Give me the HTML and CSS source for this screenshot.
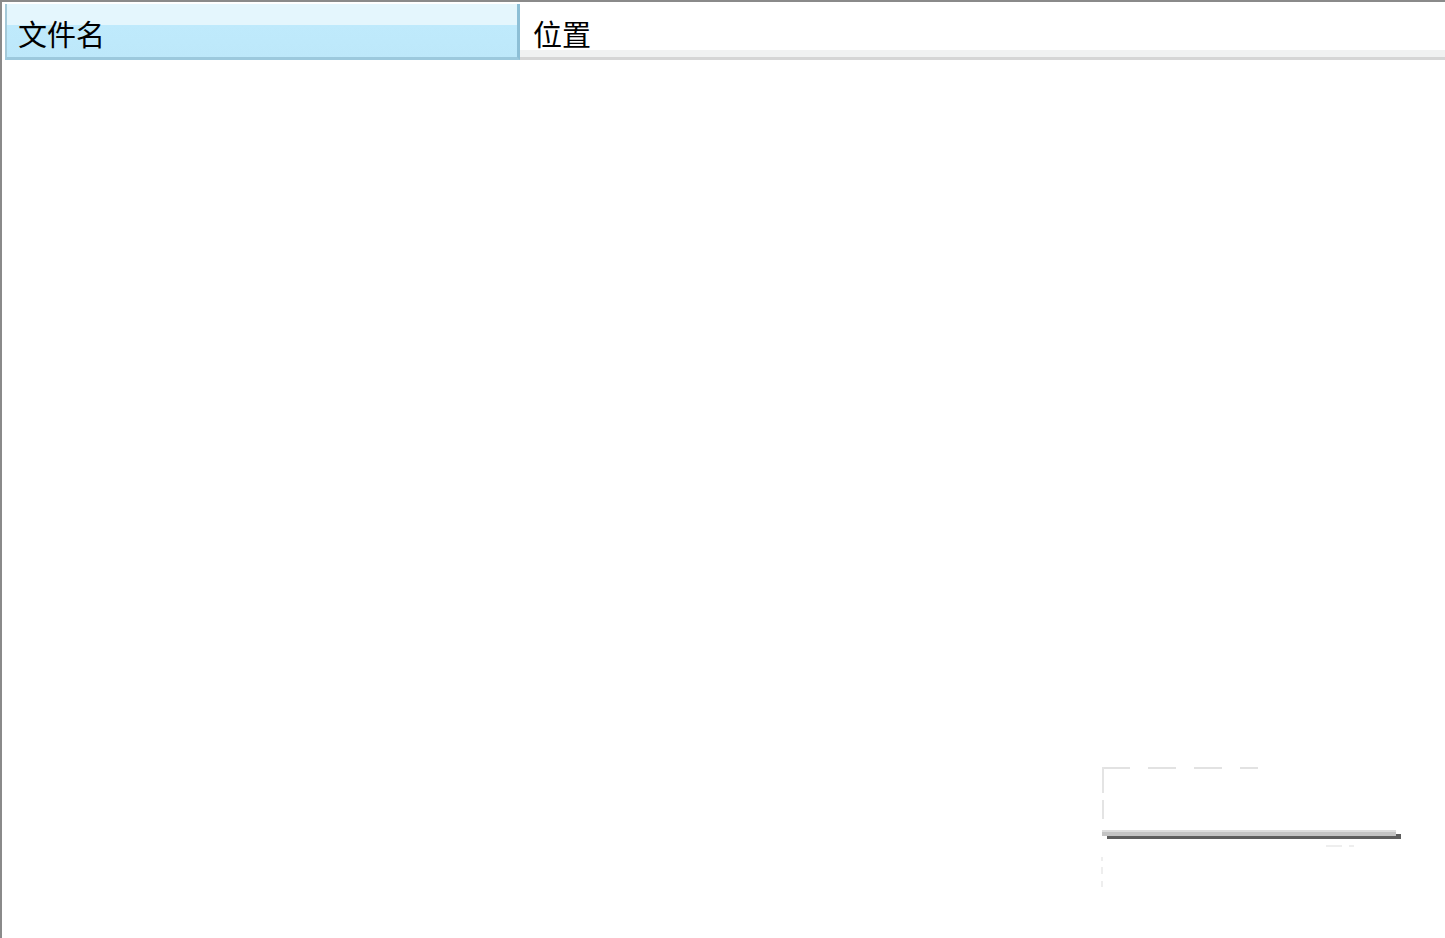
FILE: index.html
```html
<!DOCTYPE html>
<html lang="zh-CN">
<head>
<meta charset="utf-8">
<title>文件列表</title>
<link rel="stylesheet" href="styles.css">
</head>
<body>
<div class="list">
  <div class="header">
    <div class="col col-name"><span class="label">文件名</span></div>
    <div class="col col-loc"><span class="label">位置</span></div>
  </div>
  <div class="body"></div>
  <div class="ghost">
    <div class="ghost-top"></div>
    <div class="ghost-left"></div>
    <div class="ghost-bar"></div>
    <div class="ghost-bar-shadow"></div>
    <div class="ghost-tick"></div>
    <div class="ghost-left2"></div>
  </div>
</div>
</body>
</html>
```
FILE: styles.css
```css
html, body {
  margin: 0;
  padding: 0;
  background: #ffffff;
}
body {
  font-family: "Noto Sans CJK SC", "Noto Sans", sans-serif;
}
.list {
  position: relative;
  box-sizing: border-box;
  width: 1445px;
  height: 938px;
  border-top: 2px solid #8a8a8a;
  border-left: 2px solid #8a8a8a;
  padding: 2px 0 0 3px;
  overflow: hidden;
}
.header {
  display: flex;
  height: 56px;
}
.col {
  box-sizing: border-box;
  height: 56px;
  display: flex;
  align-items: center;
}
.label {
  font-size: 29px;
  line-height: 1;
  color: #000000;
  position: relative;
  top: 3px;
  font-weight: 400;
}
.col-name {
  width: 515px;
  padding-left: 11px;
  background: linear-gradient(to bottom, #e4f6fd 0, #e4f6fd 21px, #bfeafc 21px, #bde8fa 100%);
  border-left: 2px solid #a4c9d9;
  border-right: 3px solid #8dbfd6;
  border-bottom: 3px solid #9cc9dd;
}
.col-loc {
  flex: 1;
  padding-left: 13px;
  background: linear-gradient(to bottom, #ffffff 0, #ffffff 46px, #f0f1f1 46px, #f0f1f1 100%);
  border-bottom: 3px solid #d5d5d5;
}
.body {
  height: 860px;
}
.ghost div {
  position: absolute;
}
.ghost-top {
  left: 1100px;
  top: 765px;
  width: 156px;
  height: 2px;
  background: repeating-linear-gradient(to right, #e2e2e2 0, #e2e2e2 28px, #ffffff 28px, #ffffff 46px);
}
.ghost-left {
  left: 1100px;
  top: 765px;
  width: 2px;
  height: 52px;
  background: linear-gradient(to bottom, #e4e4e4 0, #e4e4e4 26px, #ffffff 26px, #ffffff 33px, #e4e4e4 33px);
}
.ghost-bar {
  left: 1100px;
  top: 828px;
  width: 294px;
  height: 6px;
  z-index: 1;
  background: linear-gradient(to bottom, #dddddd 0, #dddddd 2px, #c4c4c4 2px);
}
.ghost-bar-shadow {
  left: 1105px;
  top: 832px;
  width: 294px;
  height: 5px;
  background: #5e5e5e;
}
.ghost-tick {
  left: 1324px;
  top: 843px;
  width: 28px;
  height: 2px;
  background: linear-gradient(to right, #eeeeee 0, #eeeeee 16px, #ffffff 16px, #ffffff 23px, #eeeeee 23px);
}
.ghost-left2 {
  left: 1099px;
  top: 855px;
  width: 2px;
  height: 30px;
  background: linear-gradient(to bottom, #eeeeee 0, #eeeeee 4px, #ffffff 4px, #ffffff 10px, #eeeeee 10px, #eeeeee 17px, #ffffff 17px, #ffffff 24px, #eeeeee 24px);
}
```
